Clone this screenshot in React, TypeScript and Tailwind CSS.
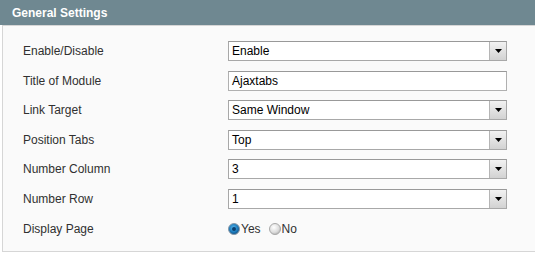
import React from "react";

function Arrow() {
  return (
    <div className="flex h-full w-[17px] items-center justify-center border-l border-[#b5b5b5] bg-gradient-to-b from-[#f2f2f2] to-[#d2d2d2]">
      <svg width="7" height="4" viewBox="0 0 7 4">
        <path d="M0 0H7L3.5 4Z" fill="#000" />
      </svg>
    </div>
  );
}

function Select({ value }: { value: string }) {
  return (
    <div className="flex h-[20px] w-[279px] items-center border border-[#a8a8a8] border-t-[#999] bg-white">
      <span className="flex-1 pl-[3px] text-[12px] text-black">{value}</span>
      <Arrow />
    </div>
  );
}

function TextInput({ value }: { value: string }) {
  return (
    <div className="flex h-[20px] w-[279px] items-center border border-[#b0b0b0] border-t-[#999] bg-white pl-[3px] text-[12px] text-black">
      {value}
    </div>
  );
}

function Radio({ checked }: { checked: boolean }) {
  return (
    <svg width="12" height="12" viewBox="0 0 12 12">
      <defs>
        <radialGradient id="blue" cx="45%" cy="40%" r="60%">
          <stop offset="0%" stopColor="#5fb8ea" />
          <stop offset="60%" stopColor="#1f7fc0" />
          <stop offset="100%" stopColor="#0d4f86" />
        </radialGradient>
        <radialGradient id="gray" cx="40%" cy="35%" r="65%">
          <stop offset="0%" stopColor="#ffffff" />
          <stop offset="70%" stopColor="#dcdcdc" />
          <stop offset="100%" stopColor="#b8b8b8" />
        </radialGradient>
      </defs>
      <circle cx="6" cy="6" r="5.5" fill={checked ? "url(#blue)" : "url(#gray)"} stroke={checked ? "#8a9aa8" : "#a9a9a9"} />
      {checked && <circle cx="6" cy="6" r="2" fill="#0a3e6e" />}
    </svg>
  );
}

const rows: { label: string; kind: "select" | "input" | "radio"; value?: string }[] = [
  { label: "Enable/Disable", kind: "select", value: "Enable" },
  { label: "Title of Module", kind: "input", value: "Ajaxtabs" },
  { label: "Link Target", kind: "select", value: "Same Window" },
  { label: "Position Tabs", kind: "select", value: "Top" },
  { label: "Number Column", kind: "select", value: "3" },
  { label: "Number Row", kind: "select", value: "1" },
  { label: "Display Page", kind: "radio" },
];

export default function App() {
  return (
    <div className="h-[255px] w-[535px] bg-white font-['Liberation_Sans',Arial,sans-serif] text-[12px]">
      <div className="flex h-[25px] items-center bg-[#6f8891] pl-[12px] text-[12px] font-bold text-white">
        General Settings
      </div>
      <div className="ml-[2px] flex flex-col gap-[9.6px] border-t border-b border-l border-[#d6d6d6] bg-[#fafafa] pt-[15px] pb-[12px] pl-[20px]">
        {rows.map((r) => (
          <div key={r.label} className="flex h-[20px] items-center">
            <div className="w-[205px] text-[#303030]">{r.label}</div>
            {r.kind === "select" && <Select value={r.value!} />}
            {r.kind === "input" && <TextInput value={r.value!} />}
            {r.kind === "radio" && (
              <div className="flex items-center text-[#303030]">
                <Radio checked />
                <span className="ml-[1px] mr-[8px]">Yes</span>
                <Radio checked={false} />
                <span className="ml-[1px]">No</span>
              </div>
            )}
          </div>
        ))}
      </div>
    </div>
  );
}
